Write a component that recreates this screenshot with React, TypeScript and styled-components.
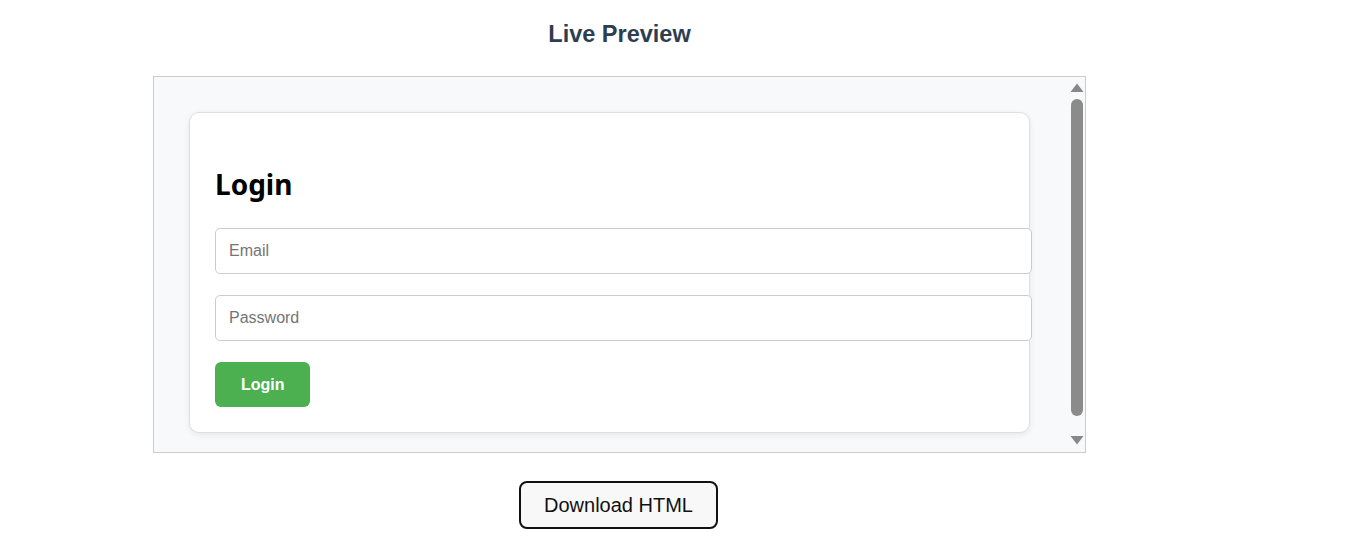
import React from "react";
import styled, { createGlobalStyle } from "styled-components";

const GlobalStyle = createGlobalStyle`
  body {
    margin: 0;
    background: #ffffff;
    font-family: "Liberation Sans", Arial, sans-serif;
  }
`;

// Page layout
const Page = styled.div`
  width: 933px;
  margin-left: 153px;
  padding-top: 21px;
  display: flex;
  flex-direction: column;
  align-items: center;
`;

const Title = styled.h2`
  margin: 0 0 29px;
  font-size: 23.5px;
  line-height: 26px;
  font-weight: 700;
  color: #2c3e50;
`;

// Preview frame
const Frame = styled.div`
  box-sizing: border-box;
  width: 100%;
  height: 377px;
  border: 1px solid #cccccc;
  background: #f8f9fa;
  display: flex;
  overflow: hidden;
`;

const FrameBody = styled.div`
  flex: 1;
  padding: 35px 38px 0 35px;
  overflow: hidden;
`;

const Card = styled.div`
  background: #ffffff;
  border: 1px solid #dedfe1;
  border-radius: 10px;
  padding: 25px;
  box-shadow: 0 2px 6px rgba(0, 0, 0, 0.07);
`;

const CardTitle = styled.h2`
  margin: 27px 0 25px;
  font-family: "Noto Sans", "Open Sans", sans-serif;
  font-size: 28px;
  line-height: 38px;
  font-weight: 700;
  color: #000000;
`;

const Field = styled.input`
  display: block;
  width: 100%;
  height: 20px;
  padding: 12px 13px;
  margin: 0 0 21px;
  border: 1px solid #cccccc;
  border-radius: 5px;
  font-family: "Liberation Sans", Arial, sans-serif;
  font-size: 16px;
  color: #333;
  background: #fff;
  outline: none;

  &::placeholder {
    color: #757575;
  }
`;

const SubmitButton = styled.button`
  height: 45px;
  padding: 0 25px 0 26px;
  border: none;
  border-radius: 6px;
  background: #4caf50;
  color: #ffffff;
  font-family: "Liberation Sans", Arial, sans-serif;
  font-size: 16px;
  font-weight: 700;
  cursor: pointer;
`;

// Scrollbar drawn beside the frame body
const Track = styled.div`
  width: 17px;
  padding: 6px 0 7px;
  display: flex;
  flex-direction: column;
  align-items: center;
  background: #f8f9fa;
`;

const Thumb = styled.div`
  width: 12px;
  height: 317px;
  margin-top: 7px;
  border-radius: 6px;
  background: #8b8b8b;
`;

const Spacer = styled.div`
  flex: 1;
`;

const DownloadButton = styled.button`
  margin: 28px 2px 0 0;
  height: 48px;
  padding: 0 23px;
  border: 2px solid #111111;
  border-radius: 8px;
  background: #f8f8f8;
  color: #111111;
  font-family: "Liberation Sans", Arial, sans-serif;
  font-size: 20px;
  cursor: pointer;
`;

const Arrow = ({ down }: { down?: boolean }) => (
  <svg width="14" height="9" viewBox="0 0 14 9">
    <polygon
      points={down ? "0.5,0 13.5,0 7,8.5" : "7,0.5 13.5,9 0.5,9"}
      fill="#888888"
    />
  </svg>
);

const App = () => {
  return (
    <>
      <GlobalStyle />
      <Page>
        <Title>Live Preview</Title>
        <Frame>
          <FrameBody>
            <Card>
              <CardTitle>Login</CardTitle>
              <Field type="email" placeholder="Email" />
              <Field type="password" placeholder="Password" />
              <SubmitButton>Login</SubmitButton>
            </Card>
          </FrameBody>
          <Track>
            <Arrow />
            <Thumb />
            <Spacer />
            <Arrow down />
          </Track>
        </Frame>
        <DownloadButton>Download HTML</DownloadButton>
      </Page>
    </>
  );
};

export default App;
